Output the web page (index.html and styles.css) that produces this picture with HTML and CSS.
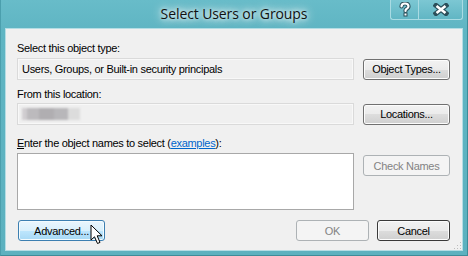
FILE: index.html
```html
<!DOCTYPE html>
<html>
<head>
<meta charset="utf-8">
<link rel="stylesheet" href="styles.css">
</head>
<body>
<div class="window">
  <div class="titlebar">
    <div></div>
    <div class="title">Select Users or Groups</div>
    <div class="caption">
      <div class="cap cap-help">
        <svg width="12" height="15" viewBox="0 0 12 15"><path d="M2.5 4.5 Q2.5 1.5 6 1.5 Q9.5 1.5 9.5 4.3 Q9.5 6 7.5 7 Q6.5 7.5 6.5 8.8 L6.5 9" fill="none" stroke="#2b4f5a" stroke-width="4.2" stroke-linecap="round"/><path d="M2.5 4.5 Q2.5 1.5 6 1.5 Q9.5 1.5 9.5 4.3 Q9.5 6 7.5 7 Q6.5 7.5 6.5 8.8 L6.5 9" fill="none" stroke="#fff" stroke-width="2.2" stroke-linecap="round"/><rect x="4.5" y="10.5" width="4" height="4" fill="#2b4f5a"/><rect x="5.5" y="11.5" width="2" height="2" fill="#fff"/></svg>
      </div>
      <div class="cap cap-close">
        <svg width="16" height="13" viewBox="0 0 16 13"><path d="M3 2.5 L13 10.5 M13 2.5 L3 10.5" stroke="#2b4f5a" stroke-width="5" stroke-linecap="square"/><path d="M3.5 3 L12.5 10 M12.5 3 L3.5 10" stroke="#fff" stroke-width="2.6"/></svg>
      </div>
    </div>
  </div>
  <div class="client">
    <div class="label">Select this object type:</div>
    <div class="row">
      <div class="field">Users, Groups, or Built-in security principals</div>
      <div class="btn">Object Types...</div>
    </div>
    <div class="label label2">From this location:</div>
    <div class="row">
      <div class="field"><span class="blur"></span></div>
      <div class="btn">Locations...</div>
    </div>
    <div class="label label3"><u>E</u>nter the object names to select (<a class="link">examples</a>):</div>
    <div class="row row-top">
      <div class="textarea"></div>
      <div class="btn btn-disabled btn-check">Check Names</div>
    </div>
    <div class="bottom">
      <div class="btn btn-hot btn-adv">Advanced...
        <svg class="cursor" width="14" height="22" viewBox="0 0 14 22"><path d="M1 1 L1 16 L4.5 12.8 L7.5 19.5 L10 18.4 L7.2 11.8 L12 11.8 Z" fill="#fff" stroke="#000" stroke-width="1"/></svg>
      </div>
      <div class="spacer"></div>
      <div class="btn btn-disabled btn-ok">OK</div>
      <div class="btn btn-default btn-cancel">Cancel</div>
    </div>
    <div class="grip"></div>
  </div>
</div>
</body>
</html>
```
FILE: styles.css
```css
html, body {
  margin: 0;
  padding: 0;
}
body {
  width: 468px;
  height: 256px;
  overflow: hidden;
  font-family: "Liberation Sans", Arial, sans-serif;
  font-size: 11px;
  letter-spacing: -0.3px;
  color: #000;
}
.window {
  box-sizing: border-box;
  width: 468px;
  height: 256px;
  background: linear-gradient(180deg, #68bcc9 0px, #5fb5c3 30px, #5cb1bf 256px);
  border: 1px solid #3d8c99;
  border-top: none;
  border-left-color: #4b9fad;
  display: flex;
  flex-direction: column;
  padding: 0 4px 4px 4px;
}
.titlebar {
  height: 28px;
  display: grid;
  grid-template-columns: 1fr auto 1fr;
  align-items: start;
}
.title {
  font-family: "Open Sans", "Noto Sans", sans-serif;
  font-size: 14px;
  letter-spacing: -0.1px;
  color: #111;
  margin-top: 4px;
  text-shadow: 0 0 8px #fff, 0 0 12px rgba(255,255,255,0.9), 0 0 4px rgba(255,255,255,0.8);
}
.caption {
  justify-self: end;
  display: flex;
}
.cap {
  height: 20px;
  box-sizing: border-box;
  border: 1px solid #a9dbe3;
  border-top: none;
  display: flex;
  align-items: center;
  justify-content: center;
  background: linear-gradient(180deg, #7cc7d3, #61b6c4);
}
.cap-help {
  width: 28px;
  border-right: none;
  border-radius: 0 0 0 3px;
}
.cap-close {
  width: 45px;
  border-radius: 0 0 3px 0;
}
.client {
  flex: 1;
  background: #f0f0f0;
  border: 1px solid #b4dde4;
  padding: 12px 12px 0 11px;
  position: relative;
}
.label {
  line-height: 14px;
  height: 14px;
  margin-bottom: 3px;
}
.label2 { margin-top: 7px; margin-bottom: 2px; }
.label3 { margin-top: 11px; margin-bottom: 3px; }
.link {
  color: #0066cc;
  text-decoration: underline;
}
.row {
  display: flex;
  align-items: center;
  gap: 9px;
}
.row-top { align-items: flex-start; }
.field {
  box-sizing: border-box;
  width: 337px;
  height: 22px;
  border: 1px solid #dadada;
  box-shadow: inset 0 0 0 1px #f8f8f8;
  background: #f0f0f0;
  padding-left: 4px;
  line-height: 20px;
  display: flex;
  align-items: center;
}
.blur {
  display: block;
  width: 58px;
  height: 12px;
  background: linear-gradient(90deg, #d0cdd0 0 8%, #bcbabd 8% 30%, #b0aeb1 30% 55%, #b8b7ba 55% 80%, #dcdcdc 80%);
  filter: blur(1.2px);
}
.textarea {
  box-sizing: border-box;
  width: 337px;
  height: 57px;
  background: #fff;
  border: 1px solid #a8a8a8;
}
.btn {
  box-sizing: border-box;
  width: 87px;
  height: 21px;
  border: 1px solid #707070;
  border-radius: 3px;
  box-shadow: inset 0 0 0 1px #fcfcfc;
  background: linear-gradient(180deg, #f2f2f2 0%, #ebebeb 50%, #dddddd 50%, #cfcfcf 100%);
  display: flex;
  align-items: center;
  justify-content: center;
  line-height: 14px;
  position: relative;
}
.btn-disabled {
  border-color: #adb2b5;
  background: #f4f4f4;
  box-shadow: none;
  color: #838383;
}
.btn-check { margin-top: 2px; }
.btn-hot {
  border-color: #3c7fb1;
  box-shadow: inset 0 0 0 1px #f3fbfe;
  background: linear-gradient(180deg, #eaf6fd 0%, #d9f0fc 50%, #bee6fd 50%, #a7d9f5 100%);
}
.btn-default {
  border-color: #3a3a3a;
}
.bottom {
  display: flex;
  align-items: center;
  margin-top: 10px;
  padding-left: 1px;
}
.spacer { flex: 1; }
.btn-ok { width: 73px; margin-right: 8px; }
.btn-cancel { width: 73px; }
.cursor {
  position: absolute;
  left: 71px;
  top: 3px;
}
.grip {
  position: absolute;
  right: 1px;
  bottom: 1px;
  width: 8px;
  height: 8px;
  background:
    radial-gradient(circle, #bdbdbd 0.8px, transparent 1px) 0 0 / 3px 3px;
  clip-path: polygon(100% 0, 100% 100%, 0 100%);
}
```
